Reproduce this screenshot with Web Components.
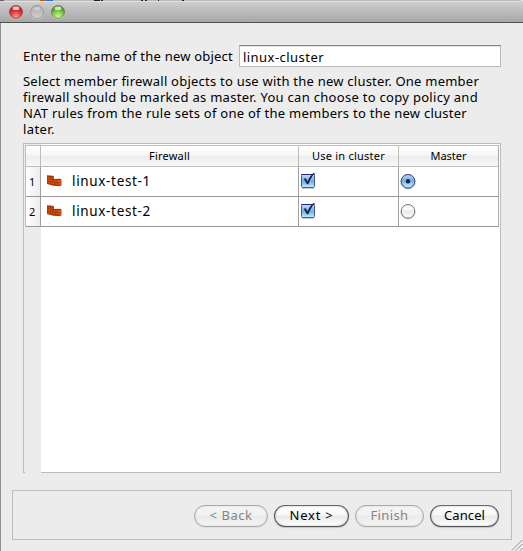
<!DOCTYPE html>
<html lang="en"><head><meta charset="utf-8"><title>New cluster</title>
<style>html,body{margin:0;height:100%;overflow:hidden}body{background:#ececec;font:13px/16px "Noto Sans","Open Sans",sans-serif;color:#000}</style></head>
<body><wizard-window></wizard-window>
<script>
const define=(name,html,setup)=>customElements.define(name,class extends HTMLElement{
  connectedCallback(){if(this.shadowRoot)return;this.attachShadow({mode:'open'}).innerHTML=html;if(setup)setup(this,this.shadowRoot)}
});

// A single line of text tracked to a given width.
define('fit-text','<style>:host{display:block;white-space:nowrap;flex:none}span{display:inline-block;vertical-align:top}</style><span><slot></slot></span>',(el,r)=>{
  const w=+el.getAttribute('width'),s=r.querySelector('span');
  el.style.width=w+'px';
  s.style.letterSpacing=((w-s.getBoundingClientRect().width)/el.textContent.length)+'px';
});

define('title-bar',`<style>
:host{display:flex;box-sizing:border-box;height:23px;padding:4px 0 0 9px;gap:7px;border-top:1px solid #b9b9b9;border-bottom:1px solid #515151;background:linear-gradient(#e2e2e2 0 1px,#cdcdcd 1px,#a7a7a7);border-radius:4px 4px 0 0;position:relative}
svg{width:14px;height:15px;display:block}
.behind{position:absolute;left:0;top:-1px;width:100%;height:1px}
</style>
<svg class="behind" viewBox="0 0 523 1" preserveAspectRatio="none"><path fill="#666" d="M0 0h4v1H0z"/><path fill="#b75b13" d="M40 0h6v1h-6z"/><path fill="#2775d0" d="M46 0h7v1h-7z"/><path fill="#221c1c" d="M94 0h6v1h-6zM101 0h2v1h-2zM141 0h2v1h-2zM145 0h2v1h-2zM158 0h1v1h-1zM182 0h2v1h-2z"/></svg>
<svg viewBox="0 0 14 15"><defs><radialGradient id="r" cx=".5" cy=".85" r=".8"><stop stop-color="#ff9b94"/><stop offset=".5" stop-color="#e53b3d"/><stop offset="1" stop-color="#981d20"/></radialGradient></defs><circle cx="7" cy="7.6" r="6.8" fill="#ddd"/><circle cx="7" cy="7" r="6.5" fill="url(#r)" stroke="#923c3d" stroke-width=".8"/><ellipse cx="7" cy="3.2" rx="3.4" ry="1.9" fill="#fff" opacity=".7"/></svg>
<svg viewBox="0 0 14 15"><defs><linearGradient id="n" x2="0" y2="1"><stop stop-color="#aaa"/><stop offset="1" stop-color="#d2d2d2"/></linearGradient></defs><circle cx="7" cy="7.6" r="6.8" fill="#d5d5d5"/><circle cx="7" cy="7" r="6.5" fill="url(#n)" stroke="#8e8e8e" stroke-width=".8"/><ellipse cx="7" cy="3.4" rx="3.4" ry="1.8" fill="#fff" opacity=".35"/></svg>
<svg viewBox="0 0 14 15"><defs><radialGradient id="g" cx=".5" cy=".85" r=".8"><stop stop-color="#cdf58d"/><stop offset=".5" stop-color="#8cca50"/><stop offset="1" stop-color="#3c7d22"/></radialGradient></defs><circle cx="7" cy="7.6" r="6.8" fill="#ddd"/><circle cx="7" cy="7" r="6.5" fill="url(#g)" stroke="#54803d" stroke-width=".8"/><ellipse cx="7" cy="3.2" rx="3.4" ry="1.9" fill="#fff" opacity=".7"/></svg>`);

define('text-field','<style>:host{display:block;box-sizing:border-box;width:262px;height:22px;padding:3px 0 0 3px;background:#fff;border:1px solid #b9b9b9;border-top-color:#848484;box-shadow:inset 0 1px #e4e4e4}</style><slot></slot>');

define('brick-icon',`<style>:host{display:block;width:16px;height:12px}svg{display:block}</style><svg width="16" height="12" viewBox="0 0 16 12"><path fill="#9c3606" d="M1 .3 6.500.8 8 1.500V4l6-.3 1.500.7V10l-1 1.300-7-.6L1 9z"/><path fill="#cf4a05" d="M1.500 1.800 4 2.100v1.800L1.500 3.600zM4.600 2.200l2.600.3v1.800l-2.600-.3zM1.500 4.300l4.700.5v1.700l-4.700-.5zM6.900 4.900l4 .2v1.800l-4-.3zM1.500 6.700l2.500.3v1.800l-2.500-.5zM4.600 7.100l4.200.4v2l-4.200-.6zM9.500 7.600l3 .2v2.300l-3-.4z"/><path fill="#e65a10" d="m11.500 5.100 3.500-.2V7l-3.500.2zM13.100 7.800l1.900-.2v2.200l-1.900.9z"/></svg>`);

define('check-box',`<style>:host{display:block;width:17px;height:18px}svg{display:block}</style><svg width="17" height="18" viewBox="0 0 17 18"><defs><linearGradient id="c" x2="0" y2="1"><stop stop-color="#c7dcf5"/><stop offset=".45" stop-color="#7cb2ee"/><stop offset=".5" stop-color="#68a9ed"/><stop offset="1" stop-color="#c2f3ff"/></linearGradient></defs><path stroke="#aaa" opacity=".6" d="M2 16.500h12"/><rect x="1.500" y="2.500" width="13" height="13" rx="1" fill="url(#c)" stroke="#3d5a9c"/><path d="M1.500 3v-.5h13" fill="none" stroke="#252a83"/><path fill="#17233b" d="m3.700 6.800 2-.5 1.800 3.200C9 5.800 11 3 14 .7l.8.5C12 4.200 10.200 7.600 8.300 12.200H7z"/></svg>`);

define('radio-button',`<style>:host{display:block;width:16px;height:17px}svg{display:block}.on{display:none}:host([checked]) .on{display:inline}</style><svg width="16" height="17" viewBox="0 0 16 17"><defs><linearGradient id="w" x2="0" y2="1"><stop stop-color="#eee"/><stop offset=".3" stop-color="#fff"/><stop offset=".5" stop-color="#e9e9e9"/><stop offset="1" stop-color="#fff"/></linearGradient><linearGradient id="b" x2="0" y2="1"><stop stop-color="#c1d7f4"/><stop offset=".45" stop-color="#7baeea"/><stop offset="1" stop-color="#c5f4ff"/></linearGradient></defs><circle cx="8" cy="9" r="7" fill="none" stroke="#ccc"/><circle cx="8" cy="8.300" r="6.800" fill="url(#w)" stroke="#777"/><g class="on"><circle cx="8" cy="8.300" r="6.800" fill="url(#b)" stroke="#34508e"/><circle cx="8" cy="8.300" r="2.200" fill="#17233b"/></g></svg>`);

define('member-row',`<style>
:host{display:grid;grid-template-columns:14px 257px 99px 99px;column-gap:1px;height:30px;border-bottom:1px solid #999;background:#a0a0a0;box-sizing:border-box}
div{background:#fff;display:flex;align-items:flex-start}
.num{background:linear-gradient(90deg,#fff,#ededed);font-size:11px;padding:7px 0 0 3px}
.name{padding:6px 0 0 5px;font-size:13.5px}brick-icon{margin:2px 10px 0 0}
.check{padding:5px 0 0 1px}.radio{padding:6px 0 0 1px}
</style><div class="num"><slot name="number"></slot></div><div class="name"><brick-icon></brick-icon><slot></slot></div><div class="check"><check-box></check-box></div><div class="radio"><slot name="radio"></slot></div>`);

define('member-table',`<style>
:host{display:block;box-sizing:border-box;width:478px;height:330px;border:1px solid #bdbdbd;background:linear-gradient(90deg,#ececec 17px,#fff 17px);padding:1px;position:relative}
.grid{border:1px solid #bdbdbd;border-right-color:#aaa;border-bottom:0;width:472px}
.head{display:grid;grid-template-columns:14px 257px 99px 99px;column-gap:1px;background:#bdbdbd;border-bottom:1px solid #bdbdbd;font-size:11px;height:20px}
.head div{display:flex;justify-content:center;padding-top:2px;background:linear-gradient(#fff,#f7f7f7 45%,#ededed 50%,#f7f7f7)}
.gap{position:absolute;left:1px;bottom:-1px;width:16px;height:1px;background:#ececec}
</style><div class="grid"><div class="head"><div></div><div><fit-text width="41">Firewall</fit-text></div><div><fit-text width="73">Use in cluster</fit-text></div><div><fit-text width="36">Master</fit-text></div></div><slot></slot></div><div class="gap"></div>`);

define('push-button',`<style>
:host{display:flex;justify-content:center;box-sizing:border-box;width:75px;height:22px;padding-top:1px;border:1px solid #555;border-top-color:#686868;border-radius:11px;background:linear-gradient(#fff,#f8f8f8 45%,#e9e9e9 50%,#fff);box-shadow:0 1px 1px #c4c4c4,inset 0 0 2px #aaa}
:host([disabled]){color:#858585;border-color:#aaa;background:linear-gradient(#f5f5f5,#f1f1f1 45%,#eaeaea 50%,#f5f5f5);box-shadow:0 1px 1px #ddd,inset 0 0 2px #ccc}
</style><slot></slot>`);

define('wizard-footer','<style>:host{display:flex;box-sizing:border-box;width:500px;height:50px;border:1px solid #bdbdbd;justify-content:flex-end;gap:6px;padding:14px 12px 0 0}</style><slot></slot>');

define('wizard-window',`<style>
:host{display:flex;flex-direction:column;width:523px;height:551px;box-sizing:border-box;background:#ececec;position:relative}
.body{flex:1;border-left:1px solid #8f8f8f;padding:22px 0 0 22px}
.field{display:flex;height:22px}.field>fit-text{margin:3px 6px 0 0}
.copy{padding-top:6px;height:64px}
member-table{margin-top:6px}
wizard-footer{margin:17px 0 0 -11px}
.w74{width:74px}.w69{width:69px}
.grip{position:absolute;right:0;bottom:0}
</style><title-bar></title-bar>
<div class="body">
<div class="field"><fit-text width="210">Enter the name of the new object</fit-text><text-field><fit-text width="81">linux-cluster</fit-text></text-field></div>
<div class="copy"><fit-text width="456">Select member firewall objects to use with the new cluster. One member</fit-text><fit-text width="455">firewall should be marked as master. You can choose to copy policy and</fit-text><fit-text width="444">NAT rules from the rule sets of one of the members to the new cluster</fit-text><fit-text width="32">later.</fit-text></div>
<member-table>
<member-row><fit-text slot="number" width="7">1</fit-text><fit-text width="79">linux-test-1</fit-text><radio-button slot="radio" checked></radio-button></member-row>
<member-row><fit-text slot="number" width="7">2</fit-text><fit-text width="79">linux-test-2</fit-text><radio-button slot="radio"></radio-button></member-row>
</member-table>
<wizard-footer><push-button class="w74" disabled><fit-text width="43">&lt; Back</fit-text></push-button><push-button><fit-text width="44">Next &gt;</fit-text></push-button><push-button class="w69" disabled><fit-text width="38">Finish</fit-text></push-button><push-button class="w69"><fit-text width="41">Cancel</fit-text></push-button></wizard-footer>
</div>
<svg class="grip" width="12" height="12" viewBox="0 0 12 12"><path d="M1 11.500 11.500 1M5 11.500 11.500 5M9 11.500l2.500-2.500" stroke="#858585" fill="none"/><path d="M2.200 11.500 11.500 2.200M6.200 11.500l5.300-5.300" stroke="#fff" stroke-width=".6"/></svg>`);
</script></body></html>
